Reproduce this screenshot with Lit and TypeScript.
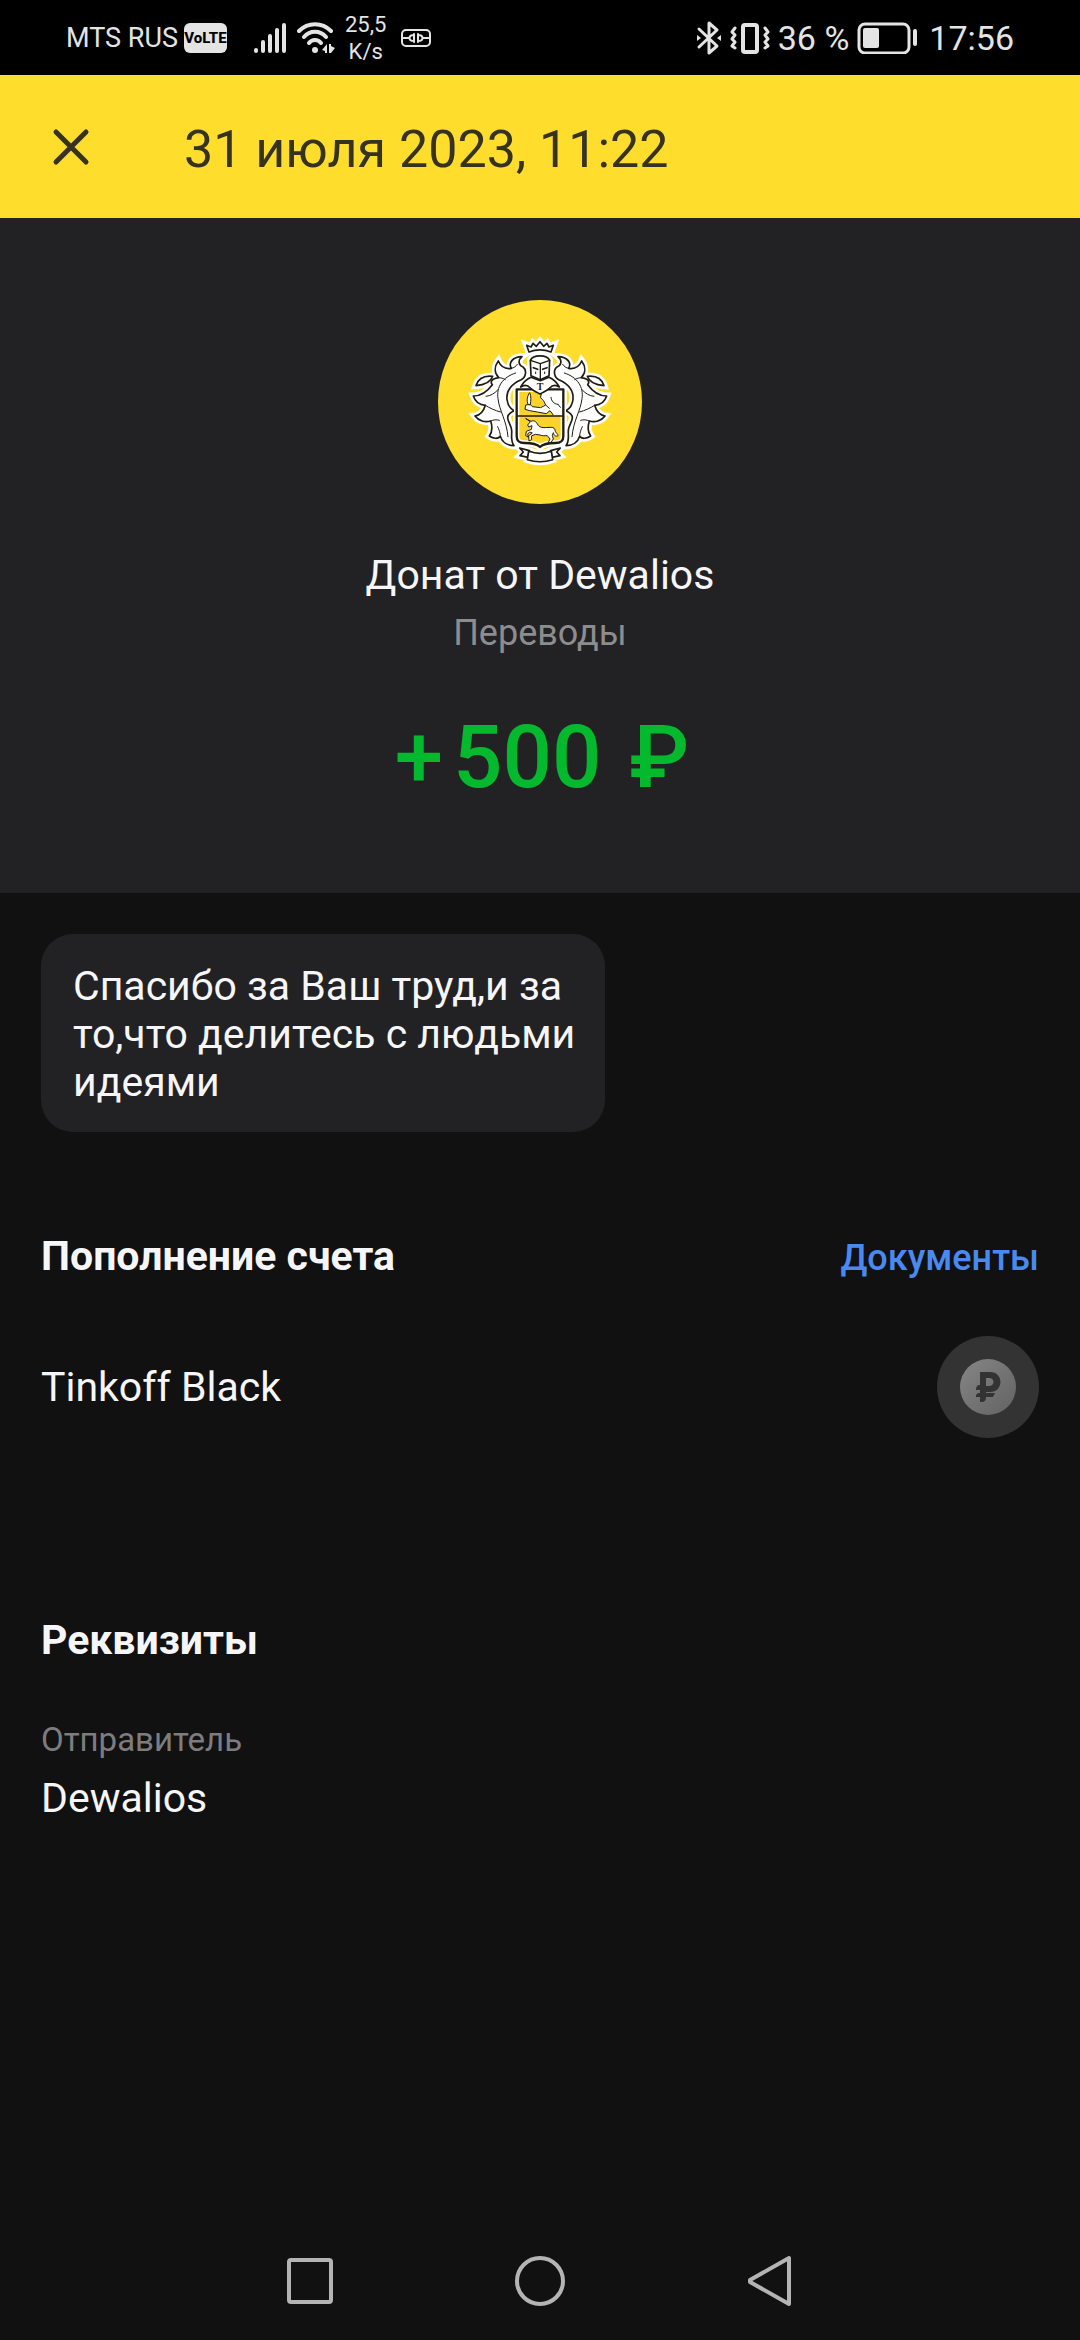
import { LitElement, html, css, svg } from 'lit';
import { customElement, property } from 'lit/decorators.js';

// one half of the mantling, the other half is mirrored
const mantling = svg`
  <path d="M205 213 C212 229 226 238 244 235 C235 219 246 201 276 200 C262 212 266 225 279 231
    C291 240 289 262 272 270 C246 281 228 302 231 328 C233 345 239 355 252 362 C241 367 233 373 233 383
    C233 395 244 405 245 421 C246 440 241 453 252 467 C232 467 216 456 211 439 C204 447 190 447 178 438
    C186 427 188 411 182 393 C165 398 146 393 135 378 C150 376 161 364 166 346 C150 345 136 336 130 318
    C152 318 173 303 187 284 C180 276 184 266 206 263 C192 248 193 229 205 213Z" />
  <path d="M138 287 C144 268 160 256 188 259 C182 277 167 285 138 287Z" />
`;

const veins = svg`
  <path d="M257 249 C216 262 199 292 204 326 C208 362 230 392 234 440" />
  <path d="M205 263 C212 263 220 265 226 269" />
  <path d="M168 319 C182 318 194 310 203 300" />
  <path d="M166 346 C177 353 195 362 212 366" />
  <path d="M182 393 C191 389 200 388 208 391" />
  <path d="M244 235 C252 234 258 229 262 223" />
  <path d="M211 439 C211 429 207 418 203 410" />
`;

const crown = svg`
  <path d="M297 186 L290 166 L303 171 L309 160 L319 169 L330 155 L341 169 L351 160 L357 171 L370 166 L363 186
    C342 178 318 178 297 186Z" />
`;

const helmet = svg`
  <path d="M301 211 C309 193 351 193 359 211 L357 257 L331 269 L303 257Z" />
  <path d="M272 291 C280 276 290 268 303 262 L331 272 L357 262 C370 268 380 276 388 291
    C377 283 368 284 359 294 C351 303 341 305 330 312 C319 305 309 303 301 294 C292 284 283 283 272 291Z" />
`;

const ribbon = svg`
  <path d="M269 474 L298 482 L294 502 L270 497 L280 486Z" />
  <path d="M391 474 L362 482 L366 502 L390 497 L380 486Z" />
  <path d="M296 483 C318 492 342 492 364 483 L368 509 C344 517 316 517 292 509Z" />
`;

const shieldShape = 'M260 298 H400 V438 C400 456 390 459 376 459 C355 459 340 461 330 471 C320 461 305 459 284 459 C270 459 260 456 260 438Z';

@customElement('bank-crest')
export class BankCrest extends LitElement {
  static styles = css`
    :host {
      display: block;
    }
    svg {
      display: block;
      width: 204px;
      height: 204px;
    }
    .halo {
      fill: #fff;
      stroke: #fff;
      stroke-width: 21;
      stroke-linejoin: miter;
    }
    .ink {
      fill: #fff;
      stroke: #1f1c12;
      stroke-width: 5;
      stroke-linejoin: round;
    }
    .line {
      fill: none;
      stroke: #1f1c12;
      stroke-width: 3;
      stroke-linecap: round;
      stroke-linejoin: round;
    }
    .letter {
      font: bold 30px 'Liberation Serif', serif;
      fill: #1f1c12;
      text-anchor: middle;
    }
  `;

  render() {
    return html`
      <svg viewBox="24 30 612 612" aria-hidden="true">
        <circle cx="330" cy="336" r="306" fill="#ffdd2d" />
        <g class="halo">
          ${mantling}
          <g transform="translate(660 0) scale(-1 1)">${mantling}</g>
          ${crown}${helmet}${ribbon}
          <path d=${shieldShape} />
        </g>
        <g class="ink">
          ${mantling}
          <g transform="translate(660 0) scale(-1 1)">${mantling}</g>
        </g>
        <g class="line">
          ${veins}
          <g transform="translate(660 0) scale(-1 1)">${veins}</g>
        </g>
        <path d=${shieldShape} fill="#fcd32b" stroke="#fff" stroke-width="16" />
        <path d="M336 300 H400 V376 H372 L361 362 L350 371 L322 366 L301 362 L285 358 L287 345 L300 343 L306 350 L332 352 L345 343 L334 328Z" fill="#fff" />
        <g class="line">
          <path d="M334 312 L331 322 L341 333 L347 345 L332 353 L307 350 L300 343 L287 345 L285 358 L299 362 L322 366 L349 371 L360 362 L369 374" />
          <path d="M294 343 C289 331 292 318 299 308 C304 318 303 331 301 343Z" fill="#fff" />
          <path d="M363 322 C364 334 372 342 384 343 M347 345 L358 355 M384 343 L391 352" />
          <path
            fill="#fff"
            d="M288 386 L303 394 C311 390 318 394 322 402 C326 409 332 413 342 413 L362 412
              C372 411 375 417 376 424 C379 431 384 431 384 437 C378 441 372 437 370 428 L367 436 L370 447 L361 460 L354 459 L360 447 L352 437
              C344 437 337 438 330 435 L316 433 L304 438 L305 449 L297 453 L296 437 L307 429 L299 426 L293 432 L295 441 L287 437 L289 424 L304 418
              L306 407 L296 411 L293 405 L300 396Z"
          />
          <path d="M260 378 H400" stroke-width="4" />
          <path d=${shieldShape} stroke-width="7" />
        </g>
        <g class="ink">${crown}${helmet}${ribbon}</g>
        <g class="line">
          <path d="M301 211 L331 221 L359 211 M331 221 V269" stroke-width="4" />
          <path d="M310 233 L323 238 M351 233 L338 238" stroke-width="5" />
          <path d="M317 246 V251 M344 246 V251" />
        </g>
        <text class="letter" x="330" y="300">T</text>
      </svg>
    `;
  }
}

@customElement('status-bar')
export class StatusBar extends LitElement {
  static styles = css`
    :host {
      display: flex;
      align-items: center;
      justify-content: space-between;
      height: 75px;
      padding: 0 66px;
      background: #000;
      color: #e4e4e4;
      font-family: Roboto, sans-serif;
    }
    .side {
      display: flex;
      align-items: center;
    }
    .left {
      gap: 10px;
    }
    .right {
      gap: 8px;
    }
    .operator {
      display: flex;
      align-items: center;
      gap: 6px;
      margin-right: 16px;
      font-size: 27px;
    }
    .volte {
      display: flex;
      align-items: center;
      justify-content: center;
      width: 43px;
      height: 30px;
      border-radius: 6px;
      background: #e4e4e4;
      color: #000;
      font-size: 15px;
      font-weight: 800;
    }
    .speed {
      font-size: 22px;
      line-height: 27px;
      text-align: center;
    }
    .link {
      margin-left: 4px;
    }
    .value {
      font-size: 34px;
      line-height: 40px;
    }
    .time {
      margin-left: 4px;
    }
    svg {
      display: block;
      fill: none;
      stroke: #e4e4e4;
      stroke-linecap: round;
      stroke-linejoin: round;
    }
    .solid {
      fill: #e4e4e4;
      stroke: none;
    }
  `;

  render() {
    return html`
      <div class="side left">
        <div class="operator">
          <span>MTS RUS</span>
          <span class="volte">VoLTE</span>
        </div>
        <svg width="34" height="32" viewBox="0 0 34 32" stroke-width="4">
          <path d="M3 28 V29 M10 20 V29 M17 14 V29 M24 8 V29 M31 3 V29" />
        </svg>
        <svg width="38" height="32" viewBox="0 0 38 32" stroke-width="4">
          <path d="M2 9 C11 0 25 0 34 9 M7 15 C13 8 23 8 29 15 M12 21 C15 17 21 17 24 21" />
          <circle class="solid" cx="18" cy="28" r="3" />
          <path class="solid" d="M30 22 V31 H28 V29 L25 28Z M32 22 V31 L34 31 L38 26 L34 24 V22Z" />
        </svg>
        <div class="speed">25,5<br />K/s</div>
        <svg class="link" width="32" height="20" viewBox="0 0 32 20" stroke-width="2">
          <rect x="2" y="2" width="28" height="16" rx="4" />
          <path d="M2 10 H9 M23 10 H30 M14 6 V14 M14 7 C8 7 8 13 14 13 M18 6 V14 M18 7 C24 7 24 13 18 13" />
        </svg>
      </div>
      <div class="side right">
        <svg width="26" height="36" viewBox="0 0 26 36" stroke-width="3">
          <path d="M3 9 L21 26 L13 33 V3 L21 10 L3 27" />
          <path class="solid" d="M1 15 L5 18 L1 21Z M25 15 L21 18 L25 21Z" />
        </svg>
        <svg width="40" height="34" viewBox="0 0 40 34" stroke-width="4">
          <rect x="13" y="4" width="14" height="27" rx="2" />
          <path d="M5 7 L2 11 L5 14 L2 18 L5 21 L2 25 L5 27 M35 7 L38 11 L35 14 L38 18 L35 21 L38 25 L35 27" stroke-width="3" />
        </svg>
        <span class="value">36 %</span>
        <svg width="60" height="32" viewBox="0 0 60 32" stroke-width="3">
          <rect x="2" y="2" width="50" height="29" rx="6" />
          <rect class="solid" x="6" y="6" width="16" height="20" rx="2" />
          <path d="M58 9 V22" stroke-width="4" />
        </svg>
        <span class="value time">17:56</span>
      </div>
    `;
  }
}

@customElement('nav-bar')
export class NavBar extends LitElement {
  static styles = css`
    :host {
      display: flex;
      justify-content: center;
      gap: 130px;
      padding: 9px 0;
    }
    button {
      display: flex;
      align-items: center;
      justify-content: center;
      width: 100px;
      height: 100px;
      padding: 0;
      border: 0;
      background: none;
    }
    svg {
      fill: none;
      stroke: #b4b4b4;
      stroke-width: 4;
      stroke-linejoin: round;
    }
  `;

  render() {
    return html`
      <button aria-label="Недавние">
        <svg width="52" height="52" viewBox="0 0 52 52"><rect x="5" y="5" width="42" height="42" rx="2" /></svg>
      </button>
      <button aria-label="Домой">
        <svg width="52" height="52" viewBox="0 0 52 52"><circle cx="26" cy="26" r="23" /></svg>
      </button>
      <button aria-label="Назад">
        <svg width="52" height="52" viewBox="0 0 52 52"><path d="M45 3 V49 L6 27 V25Z" /></svg>
      </button>
    `;
  }
}

@customElement('app-root')
export class AppRoot extends LitElement {
  static styles = css`
    :host {
      display: flex;
      flex-direction: column;
      min-height: 100vh;
      background: #111;
      color: #f6f6f8;
      font-family: Roboto, sans-serif;
      font-size: 41px;
      line-height: 48px;
    }
    h1, h2, p, dl, dt, dd {
      margin: 0;
      font-weight: 400;
      font-size: inherit;
    }
    .header {
      display: flex;
      align-items: center;
      gap: 84px;
      height: 143px;
      padding: 0 42px;
      background: #ffdd2d;
      color: #35321f;
    }
    .close {
      display: flex;
      padding: 8px;
      border: 0;
      background: none;
      color: inherit;
    }
    .close svg {
      fill: none;
      stroke: currentColor;
      stroke-width: 5;
      stroke-linecap: round;
    }
    .header h1 {
      padding-top: 6px;
      font-size: 52px;
      line-height: 64px;
    }
    .hero {
      display: flex;
      flex-direction: column;
      align-items: center;
      padding: 82px 42px 84px;
      background: #222224;
    }
    .name {
      margin-top: 47px;
    }
    .category {
      margin-top: 12px;
      color: #8d8d8f;
      font-size: 36px;
      line-height: 44px;
    }
    .amount {
      display: flex;
      margin-top: 50px;
      padding-left: 4px;
      color: #05b92f;
      font-size: 87px;
      font-weight: 500;
      line-height: 104px;
    }
    .sign {
      margin-right: 10px;
    }
    .currency {
      margin-left: 28px;
    }
    .content {
      flex: 1;
      padding: 41px 41px 0;
    }
    .message {
      box-sizing: border-box;
      width: fit-content;
      max-width: 564px;
      padding: 28px 24px 26px 32px;
      border-radius: 32px;
      background: #222224;
    }
    .row {
      display: flex;
      align-items: center;
      justify-content: space-between;
    }
    .content h2 {
      font-weight: 700;
    }
    .operation {
      align-items: baseline;
      margin-top: 100px;
    }
    .documents {
      color: #4a8af0;
      font-size: 36px;
      font-weight: 500;
      text-decoration: none;
    }
    .account {
      margin-top: 54px;
    }
    .account svg {
      display: block;
    }
    .details {
      margin-top: 178px;
    }
    .field {
      margin-top: 54px;
    }
    .field dt {
      color: #7d7d7f;
      font-size: 33px;
      line-height: 44px;
    }
    .field dd {
      margin-top: 12px;
    }
  `;

  @property() date = '31 июля 2023, 11:22';
  @property() sender = 'Dewalios';
  @property() category = 'Переводы';
  @property({ type: Number }) amount = 500;
  @property() message = 'Спасибо за Ваш труд,и за то,что делитесь с людьми идеями';
  @property() account = 'Tinkoff Black';

  render() {
    return html`
      <status-bar></status-bar>
      <header class="header">
        <button class="close" aria-label="Закрыть">
          <svg width="42" height="42" viewBox="0 0 42 42"><path d="M6 6 L36 36 M36 6 L6 36" /></svg>
        </button>
        <h1>${this.date}</h1>
      </header>
      <section class="hero">
        <bank-crest></bank-crest>
        <p class="name">Донат от ${this.sender}</p>
        <p class="category">${this.category}</p>
        <p class="amount">
          <span class="sign">+</span>
          <span>${this.amount}</span>
          <span class="currency">₽</span>
        </p>
      </section>
      <main class="content">
        <p class="message">${this.message}</p>
        <div class="row operation">
          <h2>Пополнение счета</h2>
          <a class="documents" href="#">Документы</a>
        </div>
        <div class="row account">
          <span>${this.account}</span>
          <svg width="102" height="102" viewBox="0 0 102 102">
            <defs>
              <linearGradient id="coin" x1="0" y1="0" x2="1" y2="1">
                <stop offset="0" stop-color="#868686" />
                <stop offset="1" stop-color="#626262" />
              </linearGradient>
            </defs>
            <circle cx="51" cy="51" r="51" fill="#333" />
            <circle cx="51" cy="51" r="28" fill="url(#coin)" />
            <path
              d="M43 36 H53 C67 36 67 56 53 56 H49 V57 H58 L56 61 H49 C49 64 48 66 44 66 H43 V61 H39 C39 58 40 57 43 57 V54 H39 C39 51 40 49 43 49Z
                M49 42 V50 H52 C58 50 58 42 52 42Z"
              fill="#333"
              fill-rule="evenodd"
            />
          </svg>
        </div>
        <h2 class="details">Реквизиты</h2>
        <dl class="field">
          <dt>Отправитель</dt>
          <dd>${this.sender}</dd>
        </dl>
      </main>
      <nav-bar></nav-bar>
    `;
  }
}
